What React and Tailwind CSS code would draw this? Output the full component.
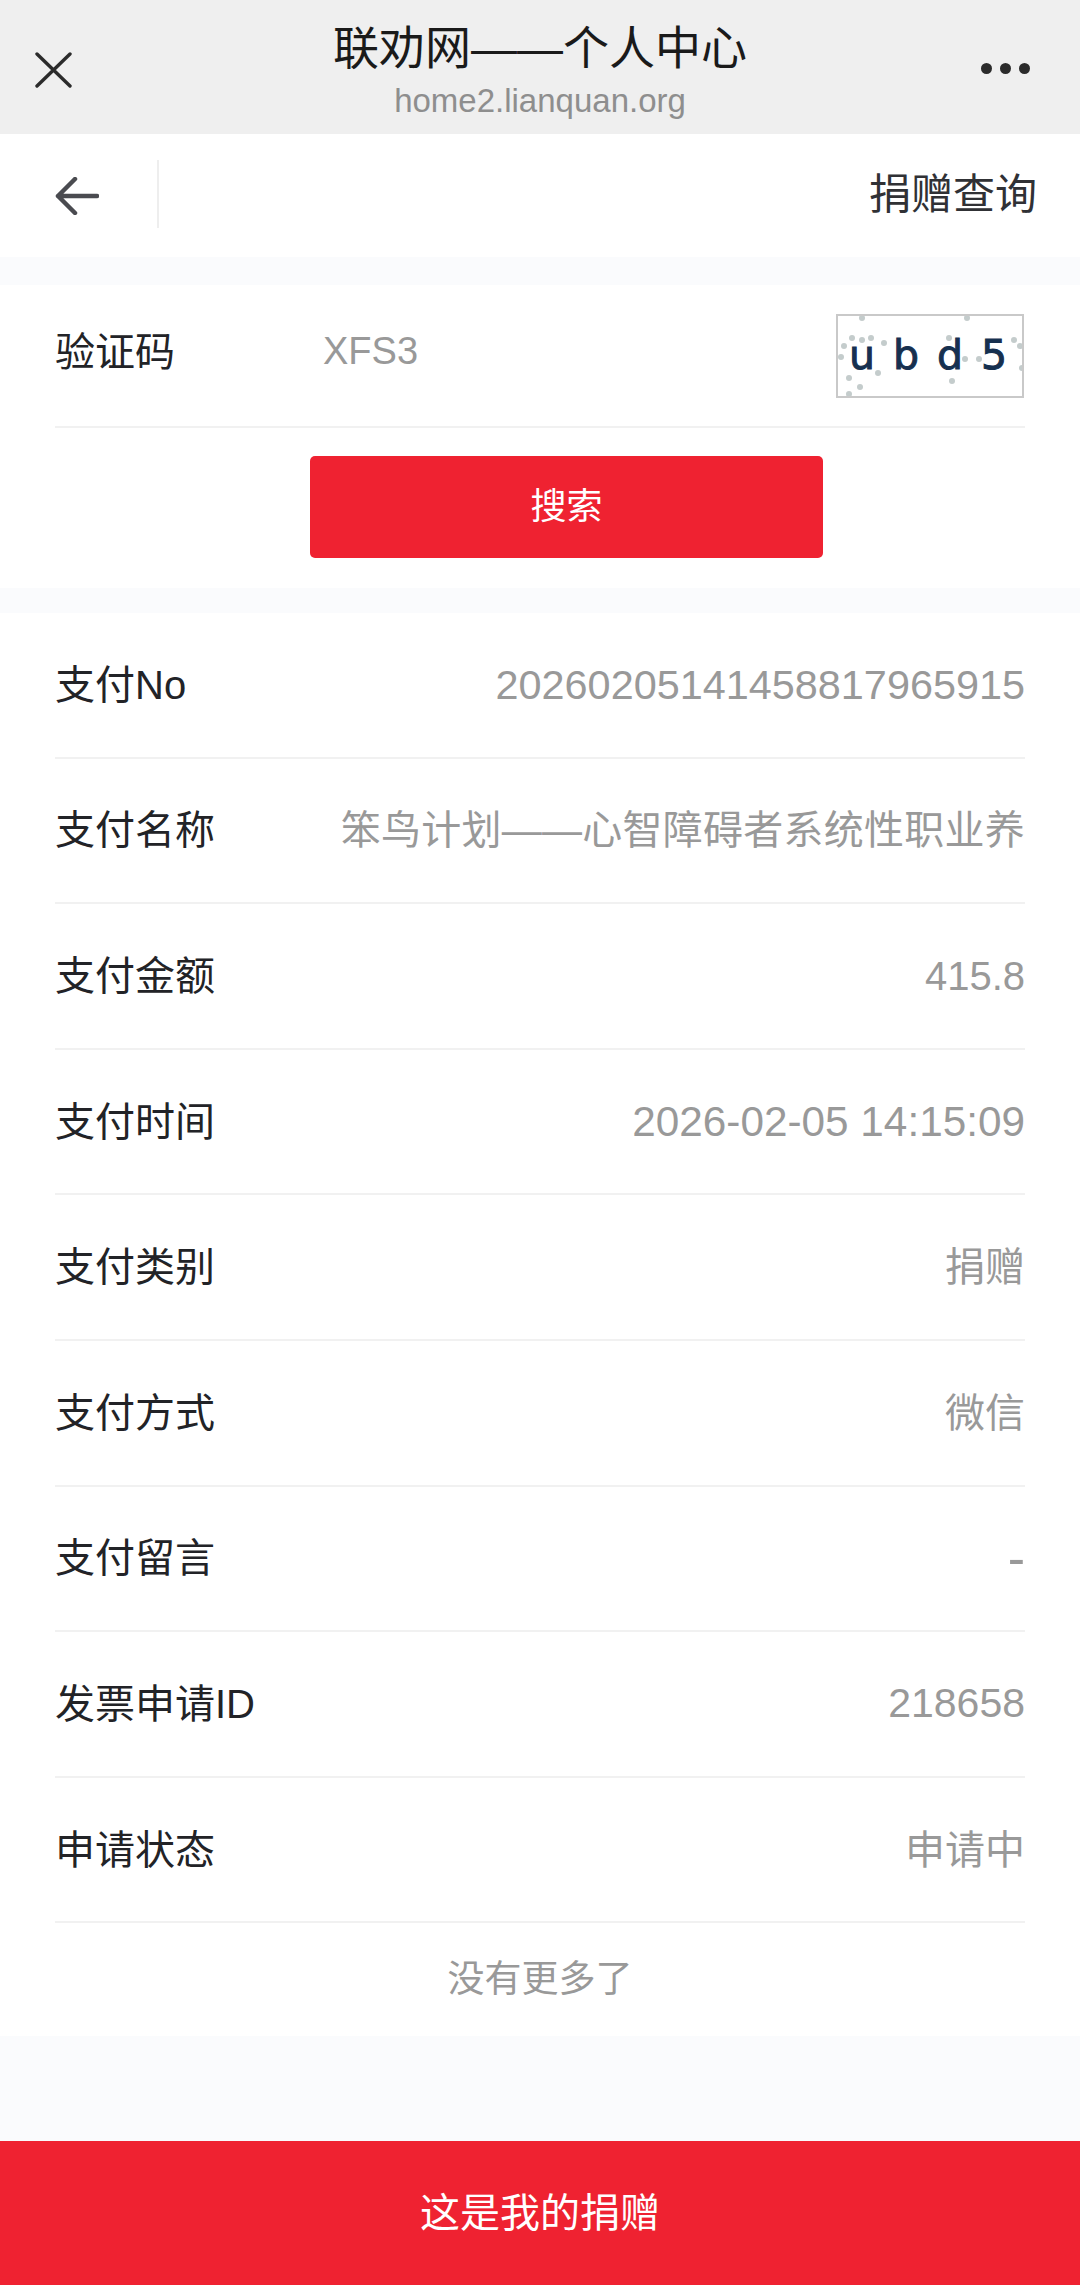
const rows = [
  ['支付No', '20260205141458817965915', 'text-[41.4px]'],
  ['支付名称', '笨鸟计划——心智障碍者系统性职业养', 'text-[40px] tracking-[0.25px]'],
  ['支付金额', '415.8', 'text-[40px]'],
  ['支付时间', '2026-02-05 14:15:09', 'text-[42.3px]'],
  ['支付类别', '捐赠', 'text-[40px]'],
  ['支付方式', '微信', 'text-[40px]'],
  ['支付留言', '-', 'text-[52px]'],
  ['发票申请ID', '218658', 'text-[41px]'],
  ['申请状态', '申请中', 'text-[40px]'],
];

const dots = [
  [24, 2], [129, 2], [14, 22], [24, 24], [33, 22], [46, 27], [6, 30], [3, 41],
  [11, 62], [40, 57], [22, 71], [11, 78], [111, 22], [127, 43], [141, 43],
  [114, 65], [176, 24], [182, 30], [184, 52],
];

function Captcha() {
  return (
    <div className="relative flex h-[84px] w-[188px] items-center justify-between border-2 border-[#c9c9c9] bg-white pl-[11px] pr-[15px] font-['DejaVu_Sans',sans-serif] text-[41px] leading-none text-[#16304f] [-webkit-text-stroke:1px_#16304f]">
      <span>u</span><span>b</span><span>d</span><span>5</span>
      <svg className="absolute left-0 top-0" width="184" height="80" viewBox="0 0 184 80">
        {dots.map(([x, y]) => <circle key={`${x}-${y}`} cx={x} cy={y} r="3" fill="#c4cccc" />)}
      </svg>
    </div>
  );
}

export default function App() {
  return (
    <div className="flex h-[2285px] w-[1080px] flex-col overflow-hidden bg-[#fafbfd] font-['Liberation_Sans','Noto_Sans_CJK_SC',sans-serif] text-[40px] text-[#222327]">
      {/* wechat bar */}
      <div className="flex h-[134px] items-start bg-[#efefef]">
        <div className="w-[110px] pl-[35px] pt-[52px]">
          <svg width="37" height="36" viewBox="0 0 37 36" fill="none" stroke="#2b2b2b" strokeWidth="3.4" strokeLinecap="round">
            <path d="M2 2 L35 34 M35 2 L2 34" />
          </svg>
        </div>
        <div className="flex-1 pt-[20px] text-center">
          <div className="text-[46px] leading-[56px] text-[#1a1a1a]">联劝网——个人中心</div>
          <div className="mt-[7px] text-[33px] leading-[36px] text-[#8e8e8e]">home2.lianquan.org</div>
        </div>
        <div className="flex w-[110px] justify-start gap-[8px] pl-[11px] pt-[63px]">
          <span className="h-[11px] w-[11px] rounded-full bg-[#2b2b2b]" />
          <span className="h-[11px] w-[11px] rounded-full bg-[#2b2b2b]" />
          <span className="h-[11px] w-[11px] rounded-full bg-[#2b2b2b]" />
        </div>
      </div>

      {/* page nav */}
      <div className="flex h-[123px] items-center bg-white pr-[43px]">
        <div className="mb-[3px] flex h-[68px] w-[159px] items-center border-r-2 border-[#eeeeee] pl-[55px]">
          <svg className="mt-[3px]" width="44" height="38" viewBox="0 0 44 38" fill="none" stroke="#4a4b50" strokeWidth="4.5" strokeLinecap="round" strokeLinejoin="round">
            <path d="M42 19 H3 M20 2 L3 19 L20 36" />
          </svg>
        </div>
        <div className="ml-auto pb-[2px] text-[42px] leading-none text-[#303135]">捐赠查询</div>
      </div>

      {/* search form */}
      <div className="mt-[28px] bg-white">
        <div className="mx-[55px] flex h-[143px] items-center border-b-2 border-[#f1f1f1] pr-[1px]">
          <span className="w-[268px] pb-[8px]">验证码</span>
          <span className="pb-[8px] text-[38px] text-[#999999]">XFS3</span>
          <div className="ml-auto"><Captcha /></div>
        </div>
        <div className="h-[160px] pl-[310px] pt-[28px]">
          <button className="h-[102px] w-[513px] rounded-[5px] bg-[#ef2231] text-[36px] text-white">搜索</button>
        </div>
      </div>

      {/* payment rows */}
      <div className="mt-[25px] bg-white">
        {rows.map(([label, value, size]) => (
          <div key={label} className="mx-[55px] flex h-[145.6px] items-center justify-between border-b-2 border-[#f1f1f1]">
            <span>{label}</span>
            <span className={`${size} text-[#999999]`}>{value}</span>
          </div>
        ))}
        <div className="flex h-[113px] items-center justify-center text-[37px] text-[#999999]">没有更多了</div>
      </div>

      {/* bottom button */}
      <button className="mt-auto h-[144px] w-full bg-[#ef2231] text-[40px] text-white">这是我的捐赠</button>
    </div>
  );
}
